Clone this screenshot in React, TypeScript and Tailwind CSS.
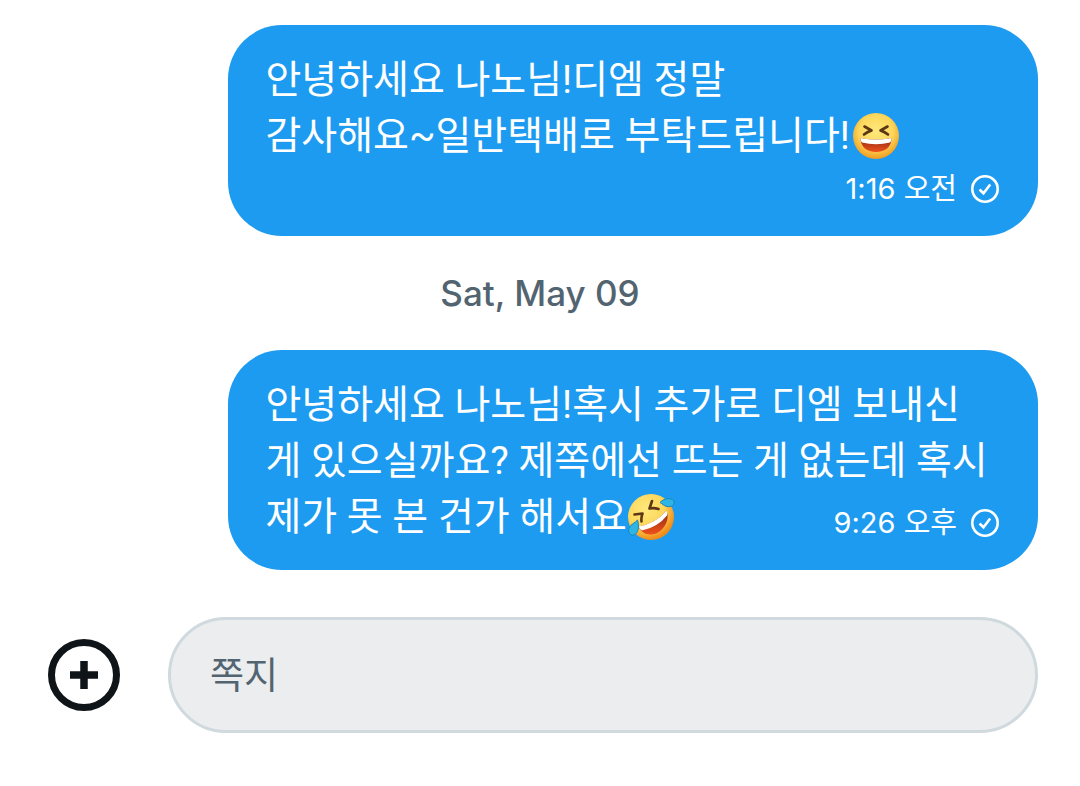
import type { ReactNode } from 'react'

function LaughingEmoji() {
  return (
    <svg viewBox="0 0 48 48" role="img" aria-label="😆" className="mr-px ml-0.5 -mt-2 -mb-0.5 inline-block size-12 align-middle">
      <defs>
        <radialGradient id="laugh-face" cx="50%" cy="40%" r="62%">
          <stop offset="0" stopColor="#fde97c" />
          <stop offset="0.6" stopColor="#fcd65a" />
          <stop offset="1" stopColor="#ef961c" />
        </radialGradient>
        <linearGradient id="laugh-mouth" x1="0" y1="0" x2="0" y2="1">
          <stop offset="0" stopColor="#8a2a14" />
          <stop offset="1" stopColor="#f0501c" />
        </linearGradient>
      </defs>
      <circle cx="24" cy="24" r="23" fill="url(#laugh-face)" />
      <path
        d="M12.500 14.500 L19.500 18.500 Q15 20 12 22.500 M35.500 14.500 L28.500 18.500 Q33 20 36 22.500"
        fill="none"
        stroke="#5c3416"
        strokeWidth="2.600"
        strokeLinecap="round"
        strokeLinejoin="round"
      />
      <path d="M8.500 26 Q24 29 39.500 26 C39.500 35 33 40 24 40 C15 40 8.500 35 8.500 26Z" fill="url(#laugh-mouth)" />
      <path d="M8.500 26 Q24 29 39.500 26 Q39.500 29 38 30.500 Q24 34 10 30.500 Q8.500 29 8.500 26Z" fill="#fff" />
    </svg>
  )
}

function RollingEmoji() {
  return (
    <svg viewBox="0 0 48 48" role="img" aria-label="🤣" className="-mt-2 -mb-0.5 inline-block size-12 align-middle">
      <defs>
        <radialGradient id="rofl-face" cx="38%" cy="32%" r="68%">
          <stop offset="0" stopColor="#fde97c" />
          <stop offset="0.6" stopColor="#fcd65a" />
          <stop offset="1" stopColor="#f08a18" />
        </radialGradient>
        <linearGradient id="rofl-mouth" x1="0" y1="0" x2="0" y2="1">
          <stop offset="0" stopColor="#8a2a14" />
          <stop offset="1" stopColor="#f0501c" />
        </linearGradient>
      </defs>
      <circle cx="24" cy="24" r="23" fill="url(#rofl-face)" />
      <path
        d="M7.500 21.500 L15.500 20.500 Q14 24.500 14.500 28.500 M25 8 L22.500 15.500 Q27 14.500 31.500 16"
        fill="none"
        stroke="#5c3416"
        strokeWidth="2.600"
        strokeLinecap="round"
        strokeLinejoin="round"
      />
      <path d="M11.500 33.500 Q28 31 39.500 17.500 C43 26 38 36 30 40 C22 43.500 14 40.500 11.500 33.500Z" fill="url(#rofl-mouth)" />
      <path d="M11.500 33.500 Q28 31 39.500 17.500 Q41 20 40 22.500 Q31 34 15 37.500 Q12.500 36 11.500 33.500Z" fill="#fff" />
      <g fill="#2fb4e6" stroke="#1787b8" strokeWidth="1">
        <path d="M33 9.500 C37 5 44 4.500 46.500 7.500 C49 11.500 44 14.500 40 13.500 C37 13 35 10.500 33 9.500Z" />
        <path d="M10.500 27 C12.500 33 11.500 40 7 42 C3 43 .5 39 2 35 C4 31 8 30 10.500 27Z" />
      </g>
    </svg>
  )
}

function SentIcon() {
  return (
    <svg viewBox="0 0 28 28" aria-hidden="true" className="size-7" fill="none" stroke="currentColor">
      <circle cx="14" cy="14" r="12.700" strokeWidth="2.600" />
      <path d="M8.500 14.500 L12.500 18.300 L19.200 9.500" strokeWidth="2.600" />
    </svg>
  )
}

type MessageProps = {
  time: string
  timeBelow?: boolean
  children: ReactNode
}

function Message({ time, timeBelow, children }: MessageProps) {
  return (
    <article className="ml-auto w-[78%] rounded-[54px] bg-[#1d9bf0] px-[37px] pt-[27px] pb-[25px] text-white">
      <div className="flow-root font-['Roboto','Noto_Sans_CJK_KR',sans-serif] text-[39px] leading-[56px] break-keep">
        {children}
        <div
          className={`float-right mr-0.5 flex h-11 items-center gap-[14px] font-['Inter','Noto_Sans_CJK_KR',sans-serif] text-[29px] ${timeBelow ? 'mt-[3px]' : 'mt-3'}`}
        >
          <time>{time}</time>
          <SentIcon />
        </div>
      </div>
    </article>
  )
}

export default function App() {
  return (
    <main className="min-h-screen bg-white py-[25px] font-['Inter','Noto_Sans_CJK_KR',sans-serif]">
      <section className="pr-[42px]">
        <Message time="1:16 오전" timeBelow>
          안녕하세요 나노님!디엠 정말
          <br />
          감사해요~일반택배로 부탁드립니다!
          <LaughingEmoji />
        </Message>
        <h2 className="-mr-[42px] flex h-[114px] items-center justify-center text-[35px] font-medium text-[#536471]">
          Sat, May 09
        </h2>
        <Message time="9:26 오후">
          안녕하세요 나노님!혹시 추가로 디엠 보내신 게 있으실까요? 제쪽에선 뜨는 게 없는데 혹시{' '}
          <span className="whitespace-nowrap">
            제가 못 본 건가 해서요
            <RollingEmoji />
          </span>
        </Message>
      </section>

      <form className="mt-[47px] flex items-center gap-12 pr-[42px] pl-12" onSubmit={(e) => e.preventDefault()}>
        <button type="button" aria-label="추가" className="size-[72px] shrink-0 text-[#0f1419]">
          <svg viewBox="0 0 72 72" fill="none" stroke="currentColor">
            <circle cx="36" cy="36" r="32.500" strokeWidth="7" />
            <path d="M36 22 V50 M22 36 H50" strokeWidth="7.500" />
          </svg>
        </button>
        <input
          type="text"
          aria-label="쪽지"
          placeholder="쪽지"
          className="h-[116px] min-w-0 flex-1 rounded-full border-3 border-[#cfd9de] bg-[#ebedef] px-[39px] text-[37px] text-[#0f1419] outline-none placeholder:text-[#536471]"
        />
      </form>
    </main>
  )
}
